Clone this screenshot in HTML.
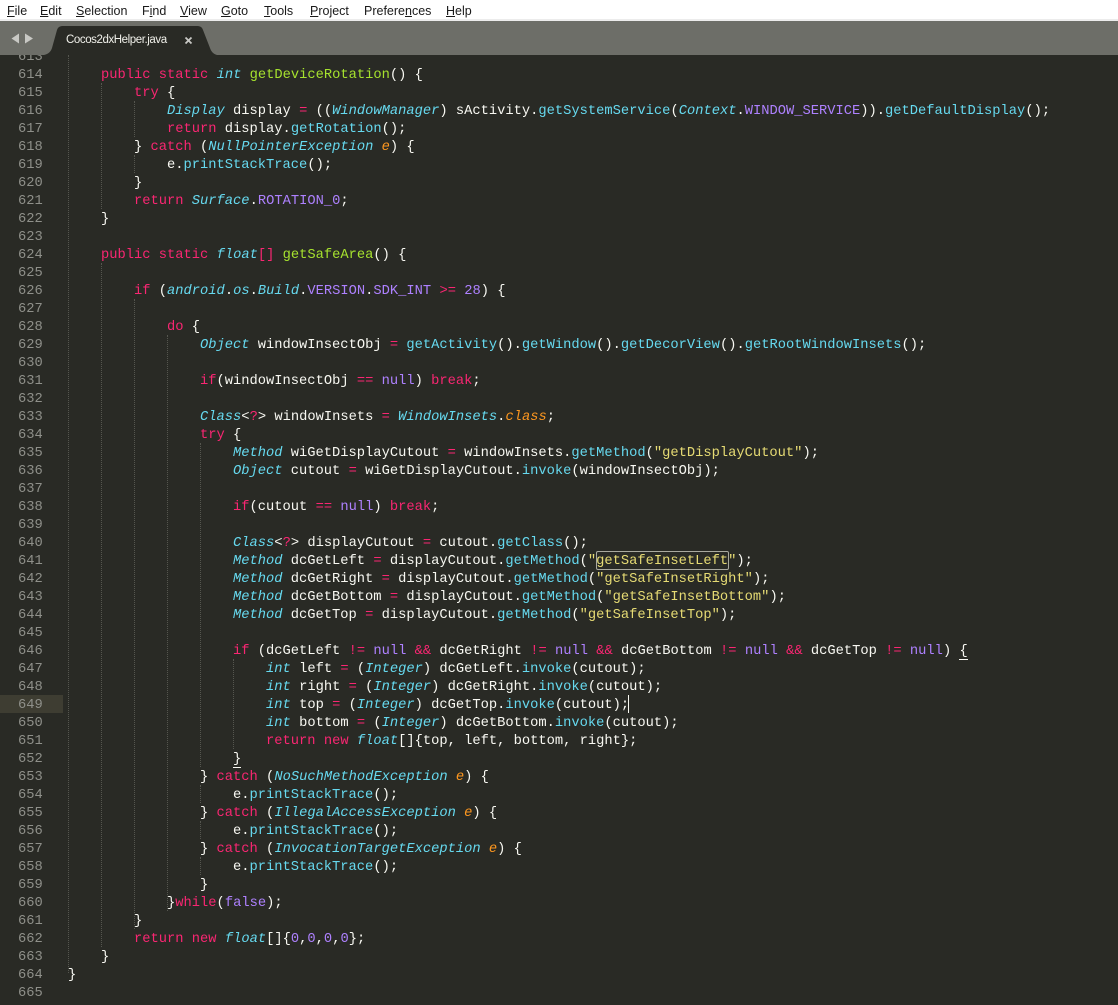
<!DOCTYPE html>
<html>
<head>
<meta charset="utf-8">
<title>Cocos2dxHelper.java</title>
<style>
html,body{margin:0;padding:0;background:#272822;}
#root{position:relative;width:1118px;height:1005px;overflow:hidden;background:#292a25;}
#menu{position:absolute;left:0;top:0;width:1118px;height:19px;background:#fff;}
#menu2{position:absolute;left:0;top:19px;width:1118px;height:2px;background:#ececec;}
#menu span{position:absolute;top:3px;font:12.5px/16px "Liberation Sans",sans-serif;color:#1a1a1a;white-space:pre;}
#bar{position:absolute;left:0;top:21px;width:1118px;height:34px;background:#6d6e68;}
#tab{position:absolute;left:0;top:21px;}
#title{position:absolute;left:66px;top:32px;font:11.5px/16px "Liberation Sans",sans-serif;letter-spacing:-0.42px;color:#f0f0ea;white-space:pre;}
#ed{position:absolute;left:0;top:55px;width:1118px;height:950px;overflow:hidden;background:#292a25;}
#hl{position:absolute;left:0;top:640px;width:63px;height:18px;background:#3e3d32;}
#nums,#code{position:absolute;top:-6px;margin:0;font:13.75px/18px "Liberation Mono",monospace;white-space:pre;}
#nums{left:18px;color:#8f908a;}
#code{left:68px;color:#f8f8f2;}
.g{position:absolute;width:0;border-left:1px dotted #55564f;}
.t{color:#66d9ef;font-style:italic}
.k{color:#f92672}
.f{color:#a6e22e}
.m{color:#66d9ef}
.s{color:#e6db74}
.c{color:#ae81ff}
.o{color:#fd971f;font-style:italic}
.u{border-bottom:1px solid #f8f8f2}
#box{position:absolute;left:596px;top:496px;width:131px;height:17px;border:1px solid #a9a99f;border-radius:2px;}
#caret{position:absolute;left:628px;top:640px;width:1px;height:18px;background:#f8f8f0;}
</style>
</head>
<body>
<div id="root">
<div id="menu">
<span style="left:7px"><u>F</u>ile</span>
<span style="left:40px"><u>E</u>dit</span>
<span style="left:76px"><u>S</u>election</span>
<span style="left:142px">F<u>i</u>nd</span>
<span style="left:180px"><u>V</u>iew</span>
<span style="left:221px"><u>G</u>oto</span>
<span style="left:264px"><u>T</u>ools</span>
<span style="left:310px"><u>P</u>roject</span>
<span style="left:364px">Prefere<u>n</u>ces</span>
<span style="left:446px"><u>H</u>elp</span>
</div>
<div id="menu2"></div>
<div id="bar"></div>
<svg id="tab" width="260" height="34" viewBox="0 0 260 34">
<path d="M44 34 C49 33 51 30 52 27 L57 9 C58 6 60 5 63 5 L197 5 C200 5 202 6 203 9 L210 27 C211 30 213 33 217 34 Z" fill="#292a25"/>
<path d="M19 12.5 L11.5 17.5 L19 22.5 Z" fill="#c8c8c4"/>
<path d="M25 12.5 L33 17.5 L25 22.5 Z" fill="#c8c8c4"/>
<path d="M185.5 16.5 L191.5 22.5 M191.5 16.5 L185.5 22.5" stroke="#c8c8c4" stroke-width="1.8" fill="none"/>
</svg>
<div id="title">Cocos2dxHelper.java</div>
<div id="ed">
<div id="hl"></div>
<div class="g" style="left:68px;top:0;height:918px"></div>
<div class="g" style="left:101px;top:28px;height:126px"></div>
<div class="g" style="left:101px;top:208px;height:684px"></div>
<div class="g" style="left:134px;top:46px;height:36px"></div>
<div class="g" style="left:134px;top:100px;height:18px"></div>
<div class="g" style="left:134px;top:244px;height:630px"></div>
<div class="g" style="left:167px;top:280px;height:576px"></div>
<div class="g" style="left:200px;top:388px;height:324px"></div>
<div class="g" style="left:200px;top:730px;height:18px"></div>
<div class="g" style="left:200px;top:766px;height:18px"></div>
<div class="g" style="left:200px;top:802px;height:18px"></div>
<div class="g" style="left:233px;top:604px;height:90px"></div>
<div id="box"></div>
<div id="caret"></div>
<pre id="nums">613
614
615
616
617
618
619
620
621
622
623
624
625
626
627
628
629
630
631
632
633
634
635
636
637
638
639
640
641
642
643
644
645
646
647
648
649
650
651
652
653
654
655
656
657
658
659
660
661
662
663
664
665</pre>
<pre id="code">

    <span class="k">public</span> <span class="k">static</span> <span class="t">int</span> <span class="f">getDeviceRotation</span>() {
        <span class="k">try</span> {
            <span class="t">Display</span> display <span class="k">=</span> ((<span class="t">WindowManager</span>) sActivity.<span class="m">getSystemService</span>(<span class="t">Context</span>.<span class="c">WINDOW_SERVICE</span>)).<span class="m">getDefaultDisplay</span>();
            <span class="k">return</span> display.<span class="m">getRotation</span>();
        } <span class="k">catch</span> (<span class="t">NullPointerException</span> <span class="o">e</span>) {
            e.<span class="m">printStackTrace</span>();
        }
        <span class="k">return</span> <span class="t">Surface</span>.<span class="c">ROTATION_0</span>;
    }

    <span class="k">public</span> <span class="k">static</span> <span class="t">float</span><span class="k">[]</span> <span class="f">getSafeArea</span>() {

        <span class="k">if</span> (<span class="t">android</span>.<span class="t">os</span>.<span class="t">Build</span>.<span class="c">VERSION</span>.<span class="c">SDK_INT</span> <span class="k">&gt;=</span> <span class="c">28</span>) {

            <span class="k">do</span> {
                <span class="t">Object</span> windowInsectObj <span class="k">=</span> <span class="m">getActivity</span>().<span class="m">getWindow</span>().<span class="m">getDecorView</span>().<span class="m">getRootWindowInsets</span>();

                <span class="k">if</span>(windowInsectObj <span class="k">==</span> <span class="c">null</span>) <span class="k">break</span>;

                <span class="t">Class</span>&lt;<span class="k">?</span>&gt; windowInsets <span class="k">=</span> <span class="t">WindowInsets</span>.<span class="o">class</span>;
                <span class="k">try</span> {
                    <span class="t">Method</span> wiGetDisplayCutout <span class="k">=</span> windowInsets.<span class="m">getMethod</span>(<span class="s">"getDisplayCutout"</span>);
                    <span class="t">Object</span> cutout <span class="k">=</span> wiGetDisplayCutout.<span class="m">invoke</span>(windowInsectObj);

                    <span class="k">if</span>(cutout <span class="k">==</span> <span class="c">null</span>) <span class="k">break</span>;

                    <span class="t">Class</span>&lt;<span class="k">?</span>&gt; displayCutout <span class="k">=</span> cutout.<span class="m">getClass</span>();
                    <span class="t">Method</span> dcGetLeft <span class="k">=</span> displayCutout.<span class="m">getMethod</span>(<span class="s">"getSafeInsetLeft"</span>);
                    <span class="t">Method</span> dcGetRight <span class="k">=</span> displayCutout.<span class="m">getMethod</span>(<span class="s">"getSafeInsetRight"</span>);
                    <span class="t">Method</span> dcGetBottom <span class="k">=</span> displayCutout.<span class="m">getMethod</span>(<span class="s">"getSafeInsetBottom"</span>);
                    <span class="t">Method</span> dcGetTop <span class="k">=</span> displayCutout.<span class="m">getMethod</span>(<span class="s">"getSafeInsetTop"</span>);

                    <span class="k">if</span> (dcGetLeft <span class="k">!=</span> <span class="c">null</span> <span class="k">&amp;&amp;</span> dcGetRight <span class="k">!=</span> <span class="c">null</span> <span class="k">&amp;&amp;</span> dcGetBottom <span class="k">!=</span> <span class="c">null</span> <span class="k">&amp;&amp;</span> dcGetTop <span class="k">!=</span> <span class="c">null</span>) <span class="u">{</span>
                        <span class="t">int</span> left <span class="k">=</span> (<span class="t">Integer</span>) dcGetLeft.<span class="m">invoke</span>(cutout);
                        <span class="t">int</span> right <span class="k">=</span> (<span class="t">Integer</span>) dcGetRight.<span class="m">invoke</span>(cutout);
                        <span class="t">int</span> top <span class="k">=</span> (<span class="t">Integer</span>) dcGetTop.<span class="m">invoke</span>(cutout);
                        <span class="t">int</span> bottom <span class="k">=</span> (<span class="t">Integer</span>) dcGetBottom.<span class="m">invoke</span>(cutout);
                        <span class="k">return</span> <span class="k">new</span> <span class="t">float</span>[]{top, left, bottom, right};
                    <span class="u">}</span>
                } <span class="k">catch</span> (<span class="t">NoSuchMethodException</span> <span class="o">e</span>) {
                    e.<span class="m">printStackTrace</span>();
                } <span class="k">catch</span> (<span class="t">IllegalAccessException</span> <span class="o">e</span>) {
                    e.<span class="m">printStackTrace</span>();
                } <span class="k">catch</span> (<span class="t">InvocationTargetException</span> <span class="o">e</span>) {
                    e.<span class="m">printStackTrace</span>();
                }
            }<span class="k">while</span>(<span class="c">false</span>);
        }
        <span class="k">return</span> <span class="k">new</span> <span class="t">float</span>[]{<span class="c">0</span>,<span class="c">0</span>,<span class="c">0</span>,<span class="c">0</span>};
    }
}
</pre>
</div>
</div>
</body>
</html>
